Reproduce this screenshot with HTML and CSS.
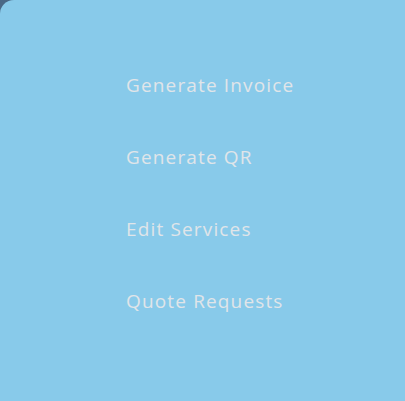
FILE: index.html
```html
<!DOCTYPE html>
<html>
<head>
<meta charset="utf-8">
<link rel="stylesheet" href="styles.css">
</head>
<body>
<nav class="panel">
  <ul class="menu">
    <li class="menu-item">Generate Invoice</li>
    <li class="menu-item">Generate QR</li>
    <li class="menu-item">Edit Services</li>
    <li class="menu-item">Quote Requests</li>
  </ul>
</nav>
</body>
</html>
```
FILE: styles.css
```css
html, body {
  margin: 0;
  padding: 0;
  background: #4a6886;
  height: 100%;
  overflow: hidden;
}
.panel {
  height: 401px;
  width: 405px;
  background: #88caea;
  border-top-left-radius: 14px;
  box-sizing: border-box;
  padding-top: 72px;
  padding-left: 126px;
}
.menu {
  list-style: none;
  margin: 0;
  padding: 0;
  display: flex;
  flex-direction: column;
  gap: 46px;
}
.menu-item {
  font-family: "Open Sans", sans-serif;
  font-size: 19px;
  line-height: 26px;
  color: #e0e5e9;
  letter-spacing: 1.15px;
}
```
